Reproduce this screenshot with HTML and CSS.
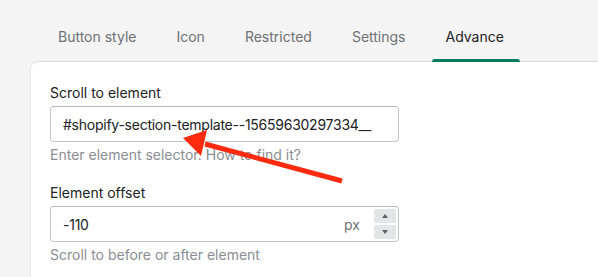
FILE: index.html
```html
<!DOCTYPE html>
<html lang="en">
<head>
  <meta charset="UTF-8">
  <meta name="viewport" content="width=device-width, initial-scale=1.0">
  <title>Advance settings</title>
  <link rel="stylesheet" href="styles.css">
</head>
<body>
  <div class="page">
    <div class="tabs">
      <div class="tab">Button style</div>
      <div class="tab">Icon</div>
      <div class="tab">Restricted</div>
      <div class="tab">Settings</div>
      <div class="tab active">Advance</div>
    </div>
    <div class="card">
      <div class="field">
        <label class="label">Scroll to element</label>
        <div class="input">
          <span class="value">#shopify-section-template--15659630297334__</span>
        </div>
        <p class="help">Enter element selector. How to find it?</p>
      </div>
      <div class="field">
        <label class="label">Element offset</label>
        <div class="input">
          <span class="value">-110</span>
          <span class="suffix">px</span>
          <div class="spinner">
            <span class="spin up"></span>
            <span class="spin down"></span>
          </div>
        </div>
        <p class="help">Scroll to before or after element</p>
      </div>
    </div>
    <!-- annotation arrow -->
    <svg class="arrow" width="598" height="277" viewBox="0 0 598 277">
      <line x1="342" y1="181" x2="205" y2="144" stroke="#fe2b0f" stroke-width="5" />
      <polygon points="183,138 207,130 201,156" fill="#fe2b0f" />
    </svg>
  </div>
</body>
</html>
```

FILE: styles.css
```css
body {
  margin: 0;
  background: #f4f4f4;
  font-family: 'Inter', 'Noto Sans', sans-serif;
  font-size: 14px;
  color: #202223;
  overflow: hidden;
}

.page {
  position: relative;
  width: 598px;
  height: 277px;
  overflow: hidden;
}

.tabs {
  display: flex;
  gap: 8px;
  padding-left: 42px;
  height: 61px;
}

.tab {
  position: relative;
  padding: 27px 16px 0;
  line-height: 20px;
  color: #6d7175;
}

.tab.active {
  color: #202223;
}

.tab.active::after {
  content: "";
  position: absolute;
  left: 2px;
  right: 0;
  bottom: -1px;
  height: 3px;
  background: #007a5c;
  border-radius: 3px 3px 0 0;
}

.card {
  margin-left: 30px;
  height: 216px;
  background: #ffffff;
  border-top: 1px solid #dcdcdc;
  border-left: 1px solid #e6e6e6;
  border-radius: 8px 0 0 0;
  padding: 21px 0 0 19px;
  box-sizing: border-box;
}

.field {
  width: 349px;
  margin-bottom: 18px;
}

.label {
  display: block;
  line-height: 20px;
  margin-bottom: 3px;
}

.input {
  display: flex;
  align-items: center;
  height: 36px;
  border: 1px solid #c4c7ca;
  border-top-color: #b5b9bd;
  border-radius: 4px;
  padding: 0 2px 0 12px;
  box-sizing: border-box;
}

.value {
  flex: 1;
  white-space: nowrap;
  letter-spacing: -0.25px;
}

.suffix {
  color: #6d7175;
  margin-right: 14px;
}

.spinner {
  display: flex;
  flex-direction: column;
  gap: 2px;
}

.spin {
  position: relative;
  width: 22px;
  height: 14px;
  background: #e4e5e7;
  border-radius: 2px;
}

.spin::after {
  content: "";
  position: absolute;
  left: 8px;
  border-left: 3px solid transparent;
  border-right: 3px solid transparent;
}

.spin.up::after {
  top: 5px;
  border-bottom: 4px solid #5c5f62;
}

.spin.down::after {
  top: 5px;
  border-top: 4px solid #5c5f62;
}

.help {
  margin: 3px 0 0;
  line-height: 20px;
  color: #8a8e92;
}

.arrow {
  position: absolute;
  left: 0;
  top: 0;
}
```
